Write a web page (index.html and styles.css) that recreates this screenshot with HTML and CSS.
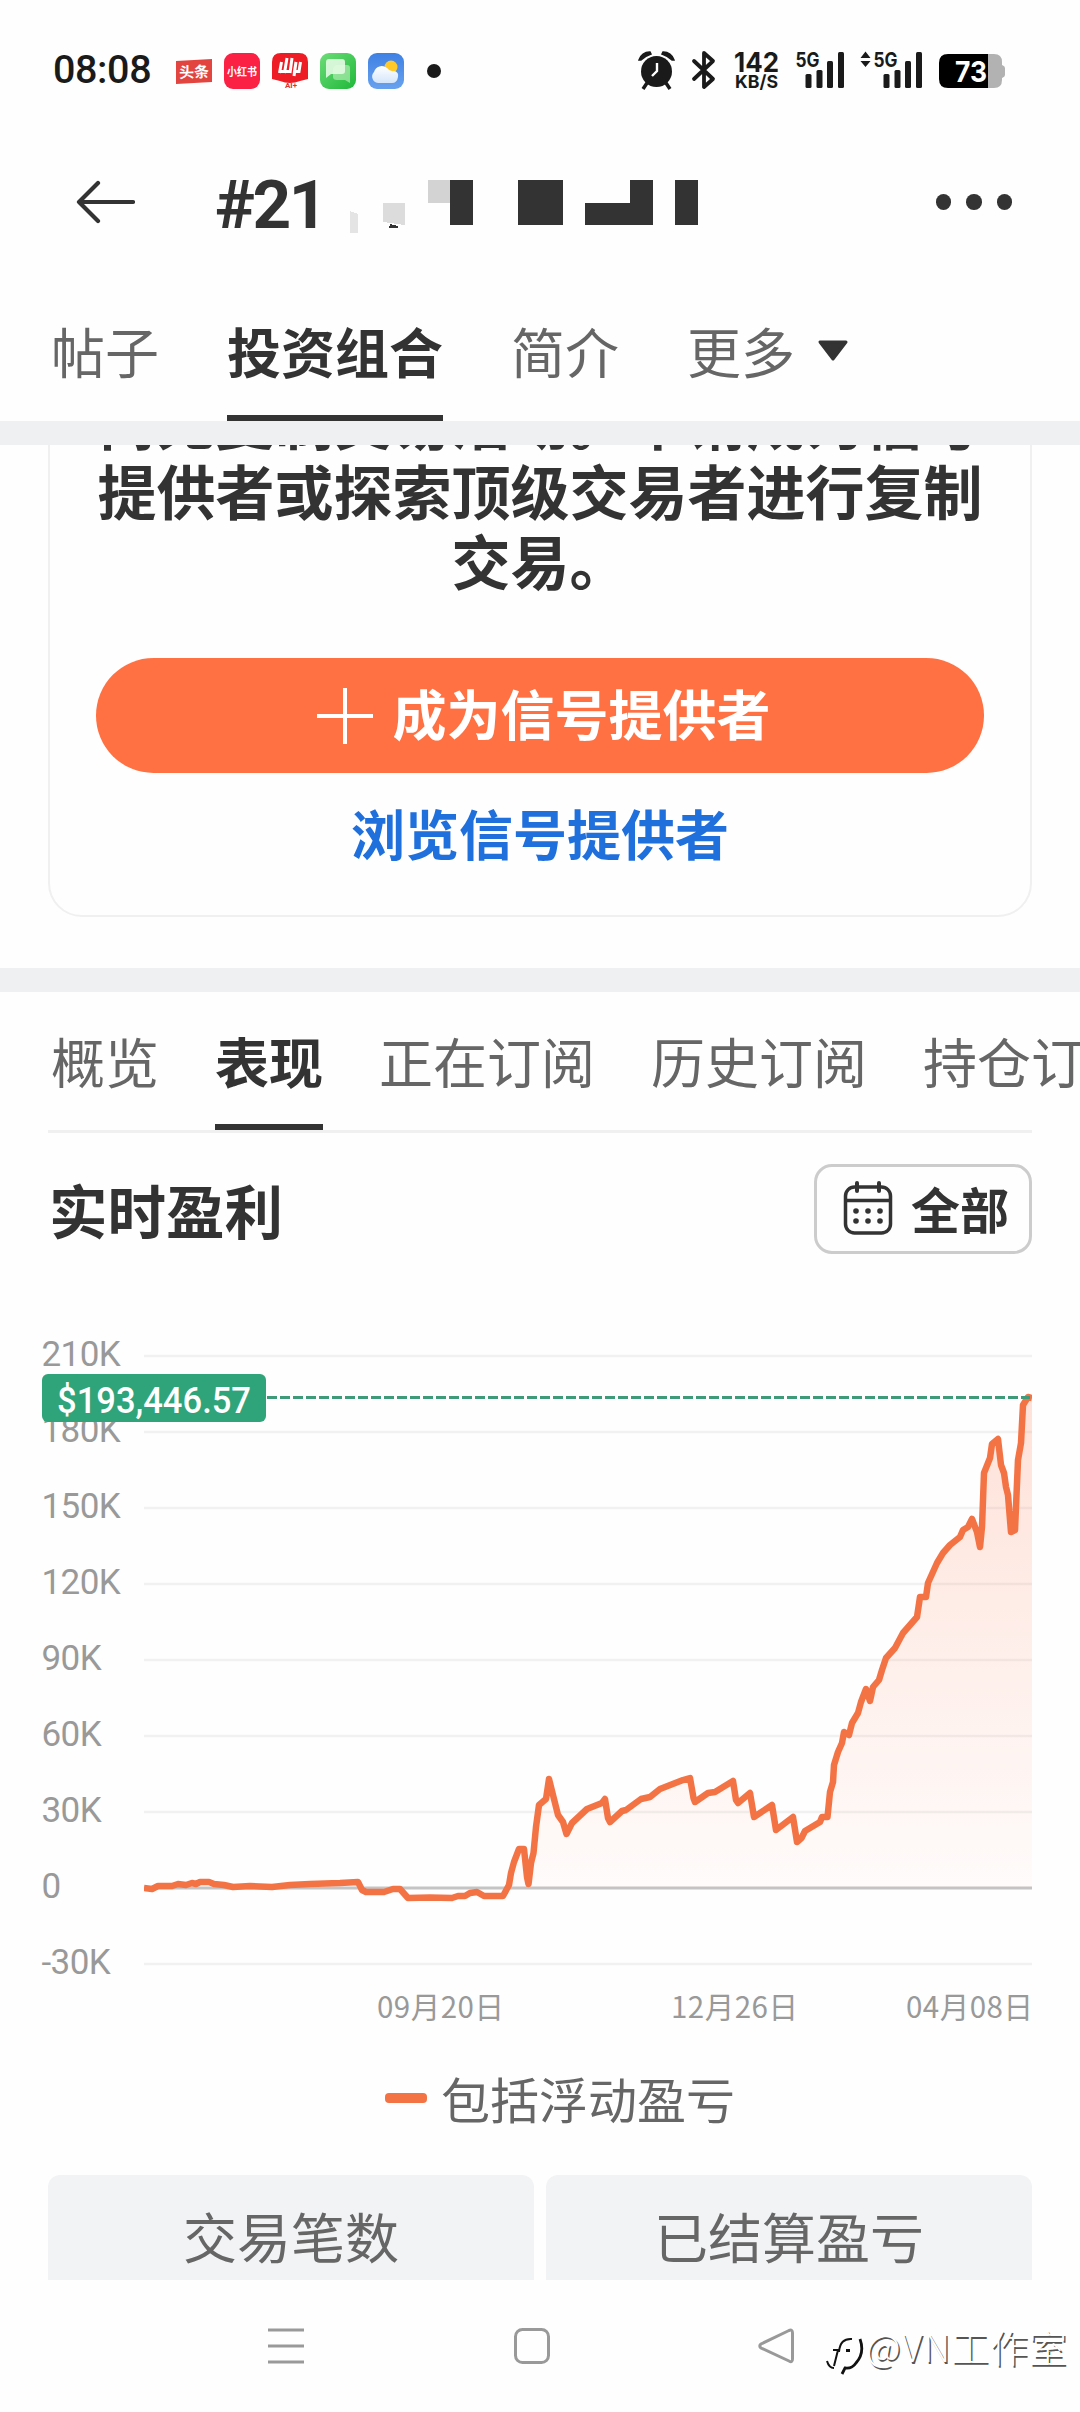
FILE: index.html
```html
<!DOCTYPE html>
<html lang="zh-CN">
<head>
<meta charset="utf-8">
<title>投资组合</title>
<link rel="stylesheet" href="styles.css">
</head>
<body>
<div class="screen">
  <div class="status">
    <span class="clock">08:08</span>
    <div class="apps">
      <svg width="36" height="36" viewBox="0 0 36 36"><path d="M0 8L36 6V29L0 31Z" fill="#e2443f"/><text x="18" y="24.500" text-anchor="middle" font-size="15" class="ico-text" transform="rotate(-2 18 18)">头条</text></svg>
      <svg width="36" height="36" viewBox="0 0 36 36"><rect width="36" height="36" rx="9" fill="#fa2145"/><text x="18" y="22.500" text-anchor="middle" font-size="11" textLength="30" lengthAdjust="spacingAndGlyphs" class="ico-text">小红书</text></svg>
      <svg width="36" height="36" viewBox="0 0 36 36"><path d="M9 0H27Q36 0 36 9V26L28 28Q18 32 8 28L0 26V9Q0 0 9 0Z" fill="#ee1c24"/><path d="M9.500 9L7.500 20M15 5L12.500 20M20 5L18 20M8 18.500H17M24 9L22.500 18.500H27L28.500 9M24 9L22 23" fill="none" stroke="#fff" stroke-width="3"/><text x="19" y="35" text-anchor="middle" font-size="8" class="ai-text">AI+</text></svg>
      <svg width="36" height="36" viewBox="0 0 36 36"><defs><linearGradient id="gm" x1="0" y1="0" x2="1" y2="1"><stop offset="0" stop-color="#6ddc78"/><stop offset="1" stop-color="#1fb83a"/></linearGradient></defs><rect width="36" height="36" rx="9" fill="url(#gm)"/><path d="M16 12H27Q30 12 30 15V30L25 27H17Q13 27 13 24V15Z" fill="#b9efb9" opacity=".65"/><path d="M9 6H22Q25 6 25 9V18Q25 21 22 21H11L6 25V9Q6 6 9 6Z" fill="#e4fbe3" opacity=".9"/></svg>
      <svg width="36" height="36" viewBox="0 0 36 36"><defs><linearGradient id="gw" x1="0" y1="0" x2="0" y2="1"><stop offset="0" stop-color="#3f80e4"/><stop offset="1" stop-color="#68a2ee"/></linearGradient><linearGradient id="gc" x1="0" y1="0" x2="0" y2="1"><stop offset="0" stop-color="#fff"/><stop offset="1" stop-color="#d4e6fa"/></linearGradient></defs><rect width="36" height="36" rx="9" fill="url(#gw)"/><circle cx="23" cy="14" r="6.500" fill="#ffc928"/><path d="M11 30A6.500 6.500 0 0 1 6 19A8 8 0 0 1 19 15Q22 19 26 18Q31 19 30 24Q29 30 24 30Z" fill="url(#gc)"/></svg>
    </div>
    <i class="notif"></i>
    <svg class="sys" width="372" height="50" viewBox="636 46 372 50">
      <g fill="#1a1a1a" stroke="none">
        <circle cx="656.500" cy="71.500" r="15.500"/>
        <path d="M639 60A11 11 0 0 1 650 52L651 54Q645 56 641 60ZM674 60A11 11 0 0 0 663 52L662 54Q668 56 672 60Z" stroke="#1a1a1a" stroke-width="1.500"/>
        <path d="M647 83L643 89M666 83L670 89" stroke="#1a1a1a" stroke-width="3.500"/>
      </g>
      <path d="M657 63V71L652 76" fill="none" stroke="#fff" stroke-width="2.400"/>
      <path d="M694 61L713 79L704 87V53L713 61L694 79" fill="none" stroke="#1a1a1a" stroke-width="3.800" stroke-linejoin="round" stroke-linecap="round"/>
      <g class="sys-text">
        <text x="734" y="71.500" font-size="27" textLength="45" lengthAdjust="spacingAndGlyphs">142</text>
        <text x="735" y="88" font-size="18" textLength="43" lengthAdjust="spacingAndGlyphs">KB/S</text>
        <text x="795.500" y="66.500" font-size="20" textLength="24" lengthAdjust="spacingAndGlyphs">5G</text>
        <text x="873.500" y="66.500" font-size="20" textLength="24" lengthAdjust="spacingAndGlyphs">5G</text>
      </g>
      <g fill="#1a1a1a">
        <rect x="805.500" y="74" width="6" height="14" rx="1.500"/><rect x="816.500" y="70" width="6" height="18" rx="1.500"/><rect x="827" y="61" width="6" height="27" rx="1.500"/><rect x="838" y="52" width="6" height="36" rx="1.500"/>
        <rect x="883.500" y="74" width="6" height="14" rx="1.500"/><rect x="894.500" y="70" width="6" height="18" rx="1.500"/><rect x="905" y="61" width="6" height="27" rx="1.500"/><rect x="916" y="52" width="6" height="36" rx="1.500"/>
        <path d="M860.500 58L865.500 51.500L870.500 58ZM860.500 61L865.500 67L870.500 61Z"/>
      </g>
      <path d="M988 54H994Q1002 54 1002 62V65Q1005 66 1005 68V75Q1005 77 1002 78V80Q1002 88 994 88H988Z" fill="#b2b2b2"/>
      <path d="M988 54H948Q939 54 939 63V79Q939 88 948 88H988Z" fill="#000"/>
      <text x="955" y="82" font-size="29" textLength="32" lengthAdjust="spacingAndGlyphs" class="bat-text">73</text>
    </svg>
  </div>

  <div class="header">
    <svg class="back" width="60" height="44" viewBox="0 0 60 44"><path d="M58 22H4M23 3L4 22L23 41" fill="none" stroke="#333" stroke-width="4.200" stroke-linecap="round" stroke-linejoin="round"/></svg>
    <span class="name">#21</span>
    <svg class="mosaic" width="350" height="56" viewBox="349 179 350 56" shape-rendering="crispEdges">
      <path d="M350 211L358 214V233H350Z" fill="#e4e4e4"/><path d="M383 203H405V225L383 222Z" fill="#dcdcdc"/><path d="M390 224L398 226V228H389Z" fill="#333"/><rect x="428" y="180" width="22" height="23" fill="#d3d3d3"/>
      <path d="M450 180H473V225H450ZM518 180H563V225H518ZM585 203H630V180H653V225H585ZM675 180H698V225H675Z" fill="#333"/>
    </svg>
    <div class="dots"><i></i><i></i><i></i></div>
  </div>

  <div class="tabs">
    <span>帖子</span><span class="on">投资组合</span><span>简介</span><span>更多</span>
    <svg class="caret" width="32" height="22" viewBox="0 0 32 22"><path d="M3 2H29L16 19Z" fill="#333" stroke="#333" stroke-width="3" stroke-linejoin="round"/></svg>
  </div>
  <div class="sep"></div>

  <div class="promo">
    <div class="card">
      <p>尚无复制交易活动。申请成为信号提供者或探索顶级交易者进行复制交易。</p>
      <div class="cta"><svg width="58" height="58" viewBox="0 0 58 58"><path d="M29 1V57M1 29H57" stroke="#fff" stroke-width="4"/></svg><span>成为信号提供者</span></div>
      <div class="browse">浏览信号提供者</div>
    </div>
  </div>
  <div class="sep"></div>

  <div class="subtabs"><span>概览</span><span class="on">表现</span><span>正在订阅</span><span>历史订阅</span><span>持仓订阅</span></div>

  <div class="title-row">
    <h2>实时盈利</h2>
    <div class="range">
      <svg width="50" height="56" viewBox="0 0 50 56"><g fill="none" stroke="#333" stroke-width="3.500"><rect x="2.500" y="6" width="45" height="46" rx="9"/><path d="M2 19.500H48"/><path d="M14 2V10M36 2V10" stroke-width="4" stroke-linecap="round"/></g><g fill="#333"><circle cx="13" cy="30" r="2.800"/><circle cx="25" cy="30" r="2.800"/><circle cx="37" cy="30" r="2.800"/><circle cx="13" cy="40" r="2.800"/><circle cx="25" cy="40" r="2.800"/><circle cx="37" cy="40" r="2.800"/></g></svg>
      <span>全部</span>
    </div>
  </div>

  <div class="chart">
    <svg width="1080" height="730" viewBox="0 1310 1080 730">
      <defs>
        <linearGradient id="area" gradientUnits="userSpaceOnUse" x1="0" y1="1397" x2="0" y2="1888"><stop offset="0" stop-color="#ff7142" stop-opacity=".2"/><stop offset="1" stop-color="#ff7142" stop-opacity=".02"/></linearGradient>
        <clipPath id="above"><rect x="144" y="1380" width="888" height="508"/></clipPath>
        <clipPath id="plot"><rect x="144" y="1380" width="888" height="600"/></clipPath>
      </defs>
      <path d="M144 1356H1032M144 1432H1032M144 1508H1032M144 1584H1032M144 1660H1032M144 1736H1032M144 1812H1032M144 1964H1032" stroke="#f1f1f1" stroke-width="2.500"/>
      <path d="M144 1888H1032" stroke="#c4c4c4" stroke-width="3"/>
      <path clip-path="url(#above)" fill="url(#area)" d="M503 1896L509 1885 511 1873 514 1862 519 1849 524 1849 527 1877 528.500 1884 531 1863 533.500 1853 536 1827 539 1805 546 1799 549 1779 553 1795 558 1815 563 1822 566.500 1834 572 1823 587 1809 602 1803 605 1799 608 1818 610 1822 622 1811 626 1810 641 1799 650 1797 660 1789 683 1780 690 1778 693.500 1798 695 1802 708 1793 715 1792 733 1781 736 1800 738 1803 750 1793 754 1817 772 1805 776 1830 793 1817 797 1842 801.500 1838 805 1831 820 1822 822 1817 827.500 1817 830 1792 833 1782 834 1765 838 1752 842 1743 844 1732 849 1735 852 1723 858 1713 861 1702 866 1689 870 1701 873 1687 879 1680 882 1670 886 1658 895 1648 903 1633 917 1617 920 1597 926 1597 928 1583 937 1563 943 1553 950 1545 960 1537 963 1530 968 1527 972 1519 977 1532 980 1547 982 1527 984 1473 990 1458 992 1444 998 1439 1001 1465 1004 1473 1006 1487 1008 1495 1011 1532 1015 1530 1018 1460 1021 1443 1023 1405 1028 1397 1032 1398V1888H503Z"/>
      <path clip-path="url(#plot)" fill="none" stroke="#f47345" stroke-width="6.500" stroke-linejoin="round" d="M144 1888L152 1889 158 1886 172 1886 178 1884 186 1885 192 1883 196 1884 200 1882 209 1882 214 1884 224 1885 233 1887 250 1886 272 1887 290 1885 310 1884 340 1883 358 1882 362 1890 366 1892 384 1892 393 1889 400 1889 408 1898 430 1897.500 452 1898 458 1896 465 1896 470 1893 477 1892 484 1896 503 1896 509 1885 511 1873 514 1862 519 1849 524 1849 527 1877 528.500 1884 531 1863 533.500 1853 536 1827 539 1805 546 1799 549 1779 553 1795 558 1815 563 1822 566.500 1834 572 1823 587 1809 602 1803 605 1799 608 1818 610 1822 622 1811 626 1810 641 1799 650 1797 660 1789 683 1780 690 1778 693.500 1798 695 1802 708 1793 715 1792 733 1781 736 1800 738 1803 750 1793 754 1817 772 1805 776 1830 793 1817 797 1842 801.500 1838 805 1831 820 1822 822 1817 827.500 1817 830 1792 833 1782 834 1765 838 1752 842 1743 844 1732 849 1735 852 1723 858 1713 861 1702 866 1689 870 1701 873 1687 879 1680 882 1670 886 1658 895 1648 903 1633 917 1617 920 1597 926 1597 928 1583 937 1563 943 1553 950 1545 960 1537 963 1530 968 1527 972 1519 977 1532 980 1547 982 1527 984 1473 990 1458 992 1444 998 1439 1001 1465 1004 1473 1006 1487 1008 1495 1011 1532 1015 1530 1018 1460 1021 1443 1023 1405 1028 1397 1032 1398"/>
      <path d="M267 1397.500H1030" stroke="#3f9a79" stroke-width="3" stroke-dasharray="10 3"/>
      <g class="ylab"><text x="41.500" y="1366">210K</text><text x="41.500" y="1442">180K</text><text x="41.500" y="1518">150K</text><text x="41.500" y="1594">120K</text><text x="41.500" y="1670">90K</text><text x="41.500" y="1746">60K</text><text x="41.500" y="1822">30K</text><text x="41.500" y="1898">0</text><text x="41.500" y="1974">-30K</text></g>
      <g class="xlab"><text x="377" y="2017.500" textLength="127">09月20日</text><text x="671" y="2017.500" textLength="127">12月26日</text><text x="906" y="2017.500" textLength="127">04月08日</text></g>
      <rect x="42" y="1374" width="224" height="48" rx="6" fill="#2fa47a"/>
      <text class="badge" x="57" y="1412.500" textLength="194" lengthAdjust="spacingAndGlyphs">$193,446.57</text>
    </svg>
  </div>

  <div class="legend"><i></i><span>包括浮动盈亏</span></div>
  <div class="tiles"><div>交易笔数</div><div>已结算盈亏</div></div>

  <div class="nav">
    <svg width="40" height="40" viewBox="0 0 40 40"><path d="M2 4H38M2 20H38M2 36H38" stroke="#999" stroke-width="3"/></svg>
    <svg width="40" height="40" viewBox="0 0 40 40"><rect x="3.500" y="3.500" width="33" height="33" rx="7" fill="none" stroke="#999" stroke-width="3"/></svg>
    <svg width="40" height="40" viewBox="0 0 40 40"><path d="M31 4.500Q34.500 3 34.500 7V33Q34.500 37 31 35L3 22Q0.500 20 3 18Z" fill="none" stroke="#999" stroke-width="3"/></svg>
    <div class="mark">
      <svg width="38" height="40" viewBox="0 0 38 40"><path d="M1 26Q3 33 8 33M8 31L12 15H7M13 17Q14 3 26 4" fill="none" stroke="#111" stroke-width="2"/><path d="M20 15.500H24M34 4Q39 18 30 28Q26 34 19 33L16 39" fill="none" stroke="#111" stroke-width="2.800"/></svg><span>@VN工作室</span>
    </div>
  </div>
</div>
</body>
</html>
```
FILE: styles.css
```css
* { box-sizing: border-box; }
body { margin: 0; background: #fff; }
.screen {
  width: 1080px; height: 2412px; overflow: hidden;
  display: flex; flex-direction: column;
  background: #fefefe; color: #333;
  font-family: "Noto Sans CJK SC", sans-serif;
}
.screen > * { flex: none; }
svg { display: block; flex: none; }

.status { height: 142px; display: flex; align-items: center; padding: 0 0 0 53px; }
.clock { width: 123px; font: 500 39.500px/44px Roboto, sans-serif; color: #1a1a1a; letter-spacing: -.4px; padding-bottom: 2px; }
.apps { display: flex; gap: 12px; }
.notif { width: 14px; height: 14px; border-radius: 50%; background: #1a1a1a; margin-left: 23px; }
.sys { margin-left: 195px; }
.ico-text { font-family: "Noto Sans CJK SC", sans-serif; font-weight: 700; fill: #fff; }
.ai-text { font-family: Roboto, sans-serif; font-weight: 700; fill: #d33; }
.sys-text { font-family: Inter, sans-serif; font-weight: 700; fill: #1a1a1a; }
.bat-text { font-family: Inter, sans-serif; font-weight: 700; fill: #fff; }

.header { height: 123px; display: flex; align-items: center; padding: 0 68px 3px 75px; }
.name { width: 103px; margin-left: 80px; padding-top: 5px; font: 700 67.500px/80px Roboto, sans-serif; letter-spacing: -2.500px; white-space: nowrap; }
.mosaic { margin: 9px 0 0 31px; }
.dots { display: flex; gap: 15px; margin-left: auto; }
.dots i { width: 15.500px; height: 15.500px; border-radius: 50%; background: #333; }

.tabs { height: 156px; display: flex; gap: 68px; padding-left: 51px; font-size: 54px; line-height: 172px; color: #666; }
.tabs span, .subtabs span { white-space: nowrap; flex: none; }
.tabs .on { font-weight: 700; color: #333; height: 156px; border-bottom: 6px solid #333; }
.caret { margin: 75px 0 0 -46px; }
.sep { height: 24px; background: #eef0f2; }

.promo { height: 523px; overflow: hidden; padding: 0 48px 51px; display: flex; align-items: flex-end; }
.card { width: 984px; height: 900px; border: 2px solid #f0f0f1; border-radius: 34px; padding: 0 46px 41px; display: flex; flex-direction: column; justify-content: flex-end; }
.card p { margin: 0 0 63px; font-size: 59px; line-height: 70px; font-weight: 700; text-align: center; }
.cta { height: 115px; border-radius: 58px; background: #ff7142; color: #fff; display: flex; align-items: center; justify-content: center; gap: 19px; padding-left: 6px; font-size: 54px; line-height: 80px; font-weight: 700; }
.cta span { margin-top: -5px; }
.browse { margin: 20px 0 1px; font-size: 54px; line-height: 80px; font-weight: 700; color: #1f6fdd; text-align: center; }

.subtabs { height: 141px; margin-left: 48px; padding-left: 3px; display: flex; gap: 56px; font-size: 54px; line-height: 138px; color: #666; width: 1032px; overflow: hidden; background: linear-gradient(#f0f0f1, #f0f0f1) 0 138px / 984px 3px no-repeat; }
.subtabs .on { font-weight: 700; color: #333; height: 138px; border-bottom: 6px solid #333; }

.title-row { height: 177px; padding: 31px 48px 0 49px; display: flex; justify-content: space-between; align-items: flex-start; }
h2 { margin: 0; font-size: 58.500px; line-height: 89px; font-weight: 700; }
.range { width: 218px; height: 90px; border: 3px solid #ccc; border-radius: 18px; display: flex; align-items: center; gap: 18px; padding-left: 26px; font-size: 49px; font-weight: 700; line-height: 80px; }
.range span { margin-top: -3px; }
.chart { height: 730px; }
.ylab { font: 35px Roboto, sans-serif; fill: #999; letter-spacing: -.6px; }
.xlab { font: 29.500px "Noto Sans CJK SC", sans-serif; fill: #999; }
.badge { font: 500 37px Roboto, sans-serif; fill: #fff; }

.legend { height: 135px; display: flex; align-items: center; padding: 0 0 19px 385px; gap: 14px; font-size: 49px; line-height: 70px; color: #666; }
.legend i { width: 42px; height: 10px; border-radius: 4px; background: #f47345; margin-top: 0; }
.tiles { height: 105px; padding: 0 48px; display: grid; grid-template: 105px / 1fr 1fr; gap: 12px; overflow: hidden; }
.tiles div { background: #f2f3f5; border-radius: 12px 12px 0 0; text-align: center; font-size: 54px; line-height: 121px; color: #666; }
.nav { height: 132px; display: flex; align-items: flex-start; padding: 46px 0 0 266px; background: #fefefe; }
.nav > svg { margin-right: 206px; }
.nav > svg:nth-child(3) { margin-right: 28px; }
.mark { display: flex; align-items: flex-start; color: #fff; font-size: 38px; line-height: 50px; font-weight: 300; text-shadow: 1.500px 1.500px 0 #555; white-space: nowrap; }
.mark svg { margin: 9px 2px 0 0; }
.mark span { margin-top: -5px; letter-spacing: .9px; }
```
